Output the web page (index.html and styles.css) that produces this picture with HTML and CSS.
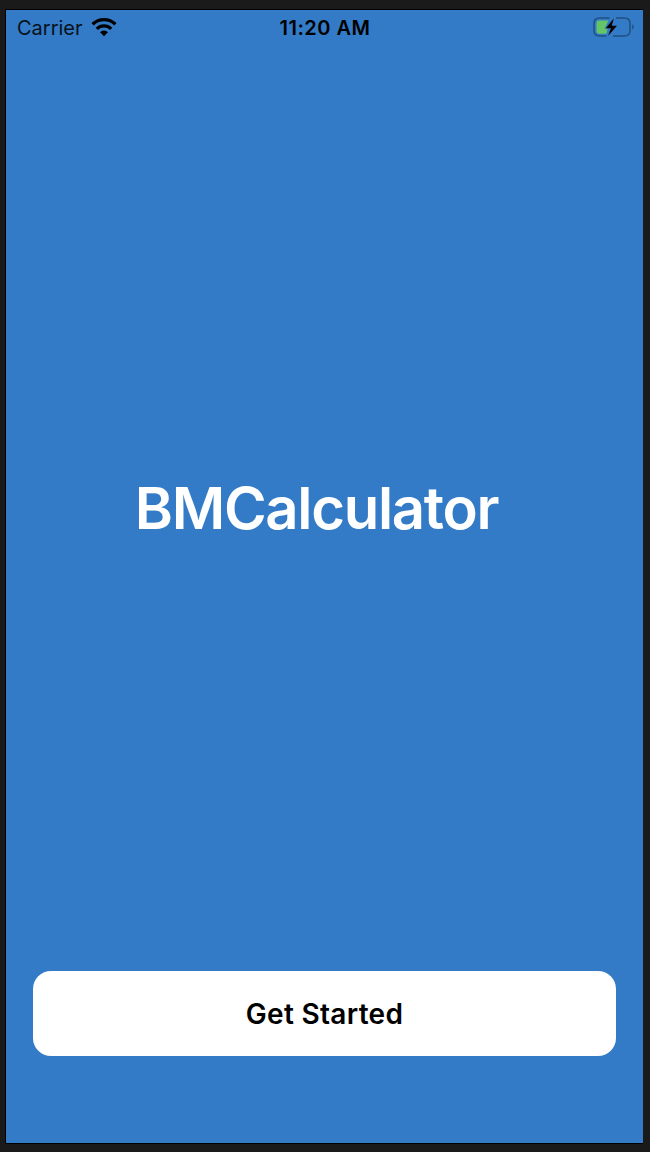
FILE: index.html
```html
<!DOCTYPE html>
<html lang="en">
<head>
<meta charset="utf-8">
<title>BMCalculator</title>
<link rel="stylesheet" href="styles.css">
</head>
<body>
<main class="screen">
  <header class="status">
    <div class="network">
      <span class="carrier">Carrier</span>
      <svg class="wifi" width="26" height="20" viewBox="0 0 26 20" fill="none" stroke="#000">
        <path d="M1.6 7.3a16.2 16.2 0 0 1 22.8 0" stroke-width="3.4"/>
        <path d="M5.8 11.8a10.3 10.3 0 0 1 14.4 0" stroke-width="3.2"/>
        <path d="M13 19.2l-4-4a5.7 5.700 0 0 1 8 0z" fill="#000" stroke="none"/>
      </svg>
    </div>
    <time class="clock">11:20 AM</time>
    <svg class="battery" width="41" height="20" viewBox="0 0 41 20">
      <path d="M16.500 1H6.800Q1 1 1 6.500V13.500Q1 19 6.800 19H13.500M23 1h8.200Q37 1 37 6.500V13.500Q37 19 31.200 19H20" fill="none" stroke="#205081" stroke-width="1.500"/>
      <path d="M39.200 7.200q1.500.8 1.500 2.800t-1.500 2.800z" fill="#205081"/>
      <path d="M6.500 3.400H15.500L11.500 11.800H14.500L13.500 16.800H6.500Q3.500 16.800 3.500 13.500V6.700Q3.500 3.400 6.500 3.400z" fill="#65c466"/>
      <path d="M20.900 1.300L12.800 11.200h5.100l-2.700 7.600L24 8.700h-5.300z" fill="#000"/>
    </svg>
  </header>
  <h1 class="title">BMCalculator</h1>
  <button class="start" type="button">Get Started</button>
</main>
</body>
</html>
```
FILE: styles.css
```css
* {
  box-sizing: border-box;
}

body {
  margin: 0;
  height: 1152px;
  padding: 9px 7px 8px 5px;
  background: #1a1a1a;
  font-family: Inter, "Liberation Sans", sans-serif;
}

.screen {
  display: flex;
  flex-direction: column;
  height: 1135px;
  padding: 0 27px 87px;
  border: solid #000;
  border-width: 1px 0 1px 1px;
  background: #337bc6;
}

.status {
  display: grid;
  grid-template-columns: 1fr auto 1fr;
  align-items: center;
  height: 35px;
  margin: 0 -18px 0 -16px;
  color: #000;
}

.network {
  display: flex;
  align-items: center;
  gap: 8px;
}

.wifi,
.battery {
  margin-bottom: 2px;
}

.carrier {
  color: #07111b;
  font-size: 20px;
}

.clock {
  margin-left: -1px;
  font-size: 20px;
  font-weight: 600;
  letter-spacing: 0.5px;
}

.battery {
  justify-self: end;
}

.title {
  display: flex;
  flex: 1;
  align-items: center;
  justify-content: center;
  margin: 0;
  padding-right: 16px;
  color: #fff;
  font-size: 58px;
  font-weight: 600;
  letter-spacing: -1.3px;
}

.start {
  height: 85px;
  padding: 0;
  border: 0;
  border-radius: 18px;
  background: #fff;
  color: #000;
  font: 600 28px Inter, "Liberation Sans", sans-serif;
  letter-spacing: 0.3px;
}
```
